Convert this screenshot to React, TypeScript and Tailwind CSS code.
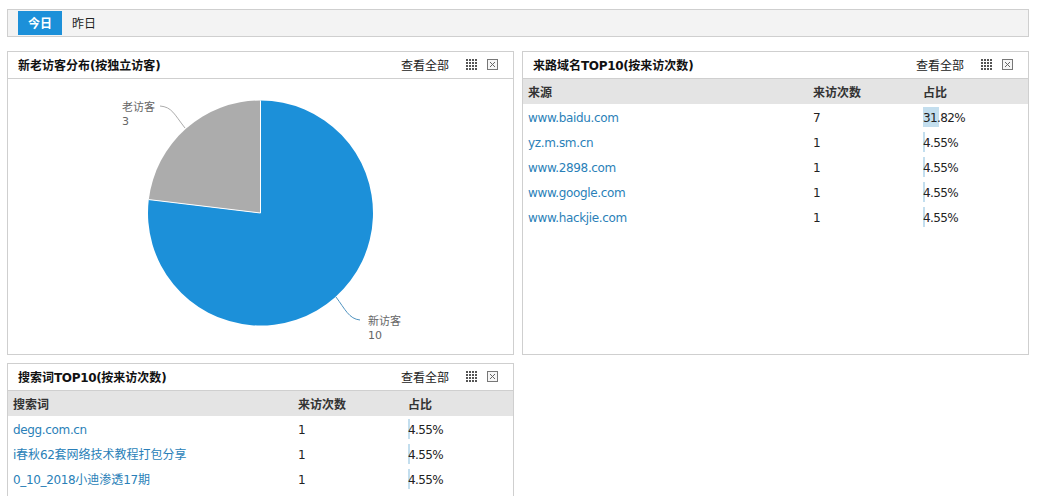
const FONT = "font-['DejaVu_Sans','Noto_Sans_CJK_SC',sans-serif]";

function GridIcon() {
  const cells = [];
  for (let r = 0; r < 4; r++) for (let c = 0; c < 4; c++) cells.push(<rect key={r + '-' + c} x={c * 3} y={r * 3} width="2" height="2" fill="#555" />);
  return <svg width="11" height="11" viewBox="0 0 11 11" className="block">{cells}</svg>;
}

function CloseIcon() {
  return (
    <svg width="11" height="11" viewBox="0 0 11 11" className="block">
      <rect x="0.5" y="0.5" width="10" height="10" fill="#f6f6f6" stroke="#777" />
      <path d="M3 3 L8 8 M8 3 L3 8" stroke="#666" fill="none" />
    </svg>
  );
}

// Latin runs sit slightly narrower than the CJK runs beside them.
function Mixed({ text }: { text: string }) {
  const parts = text.match(/[\u4e00-\u9fff]+|[^\u4e00-\u9fff]+/g) ?? [];
  return (
    <>
      {parts.map((p, i) =>
        /[\u4e00-\u9fff]/.test(p) ? <span key={i}>{p}</span> : <span key={i} className="tracking-[-0.35px]">{p}</span>
      )}
    </>
  );
}

function PanelHeader({ title }: { title: string }) {
  return (
    <div className="flex h-[27px] items-center justify-between border-b border-[#cfcfcf] pl-[10px] pr-[15px] pt-[2px]">
      <div className="text-[12px] font-bold text-[#111]"><Mixed text={title} /></div>
      <div className="flex items-center">
        <span className="text-[12px] text-[#222]">查看全部</span>
        <span className="ml-[17px] -mt-[3px]"><GridIcon /></span>
        <span className="ml-[10px] -mt-[3px]"><CloseIcon /></span>
      </div>
    </div>
  );
}

type Row = { name: string; n: string; pct: string; w: number };

function DataTable({ head, rows }: { head: string; rows: Row[] }) {
  const gridCols = "grid grid-cols-[285px_110px_1fr]";
  return (
    <div className="text-[12px]">
      <div className={gridCols + " h-[25px] items-center bg-[#e4e4e4] pl-[5px] pt-[2px] font-bold text-[#333]"}>
        <div>{head}</div>
        <div>来访次数</div>
        <div>占比</div>
      </div>
      {rows.map((r) => (
        <div key={r.name} className={gridCols + " h-[25px] items-center pl-[5px] pt-[2px] text-[#222]"}>
          <div className="text-[#2a7fb8]"><Mixed text={r.name} /></div>
          <div>{r.n}</div>
          <div className="relative">
            <span className="absolute left-0 top-[-2px] h-5 bg-[#c3deee]" style={{ width: r.w }} />
            <span className="relative tracking-[-0.6px]">{r.pct}</span>
          </div>
        </div>
      ))}
    </div>
  );
}

function Pie() {
  return (
    <svg width="505" height="275" viewBox="0 0 505 275" className="block">
      <path d="M252.5 134 L252.5 21.5 A112.5 112.5 0 1 1 140.8 120.6 Z" fill="#1c90d9" />
      <path d="M252.5 134 L140.8 120.6 A112.5 112.5 0 0 1 252.5 21.5 Z" fill="#acacac" />
      <path d="M252.5 134 L252.5 21.5 M252.5 134 L140.8 120.6" stroke="#fff" strokeWidth="1" fill="none" />
      <path d="M152 27 C164 28 166 35 177 49" stroke="#acacac" fill="none" />
      <path d="M328 218 C337 230 341 240 352 241" stroke="#4f93c0" fill="none" />
      <text x="114" y="32" fontSize="11" fill="#666">老访客</text>
      <text x="114" y="46" fontSize="11" fill="#666">3</text>
      <text x="360" y="246" fontSize="11" fill="#666">新访客</text>
      <text x="360" y="260" fontSize="11" fill="#666">10</text>
    </svg>
  );
}

const panel = "border border-[#cfcfcf] bg-white";

export default function App() {
  const domains: Row[] = [
    { name: "www.baidu.com", n: "7", pct: "31.82%", w: 16 },
    { name: "yz.m.sm.cn", n: "1", pct: "4.55%", w: 2 },
    { name: "www.2898.com", n: "1", pct: "4.55%", w: 2 },
    { name: "www.google.com", n: "1", pct: "4.55%", w: 2 },
    { name: "www.hackjie.com", n: "1", pct: "4.55%", w: 2 },
  ];
  const words: Row[] = [
    { name: "degg.com.cn", n: "1", pct: "4.55%", w: 2 },
    { name: "i春秋62套网络技术教程打包分享", n: "1", pct: "4.55%", w: 2 },
    { name: "0_10_2018小迪渗透17期", n: "1", pct: "4.55%", w: 2 },
  ];
  return (
    <div className={FONT + " h-[496px] w-[1060px] overflow-hidden bg-white pl-[7px] pr-[31px] pt-[9px]"}>
      <div className="flex h-[28px] items-center border border-[#cfcfcf] bg-[#f3f3f3] pl-[10px] text-[12px]">
        <div className="flex h-6 w-11 items-center justify-center bg-[#1c90d9] pt-[2px] font-bold text-white">今日</div>
        <div className="ml-[10px] pt-[2px] text-[#222]">昨日</div>
      </div>
      <div className="mt-[14px] grid grid-cols-[507px_507px] gap-x-2 gap-y-2">
        <div className={panel + " h-[304px]"}>
          <PanelHeader title="新老访客分布(按独立访客)" />
          <Pie />
        </div>
        <div className={panel + " h-[304px]"}>
          <PanelHeader title="来路域名TOP10(按来访次数)" />
          <DataTable head="来源" rows={domains} />
        </div>
        <div className={panel + " h-[304px]"}>
          <PanelHeader title="搜索词TOP10(按来访次数)" />
          <DataTable head="搜索词" rows={words} />
        </div>
      </div>
    </div>
  );
}
